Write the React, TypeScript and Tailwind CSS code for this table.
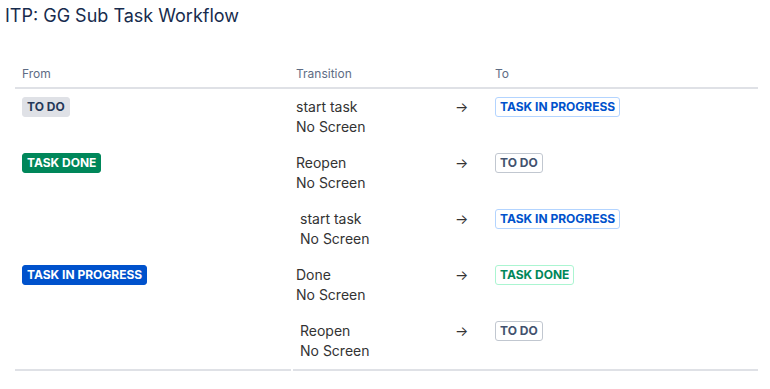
import React from 'react';

type Tone = 'gray' | 'green' | 'blue';

interface Transition {
    name: string;
    screen: string;
    to: { label: string; tone: Tone };
}

interface Group {
    from: { label: string; tone: Tone };
    transitions: Transition[];
}

const boldTone: Record<Tone, string> = {
    gray: 'bg-[#DFE1E6] border-[#DFE1E6] text-[#253858]',
    green: 'bg-[#00875A] border-[#00875A] text-white',
    blue: 'bg-[#0052CC] border-[#0052CC] text-white',
};

const subtleTone: Record<Tone, string> = {
    gray: 'bg-white border-[#C1C7D0] text-[#42526E]',
    green: 'bg-white border-[#ABF5D1] text-[#00875A]',
    blue: 'bg-white border-[#B3D4FF] text-[#0052CC]',
};

const groups: Group[] = [
    {
        from: { label: 'To Do', tone: 'gray' },
        transitions: [{ name: 'start task', screen: 'No Screen', to: { label: 'Task In Progress', tone: 'blue' } }],
    },
    {
        from: { label: 'Task Done', tone: 'green' },
        transitions: [
            { name: 'Reopen', screen: 'No Screen', to: { label: 'To Do', tone: 'gray' } },
            { name: 'start task', screen: 'No Screen', to: { label: 'Task In Progress', tone: 'blue' } },
        ],
    },
    {
        from: { label: 'Task In Progress', tone: 'blue' },
        transitions: [
            { name: 'Done', screen: 'No Screen', to: { label: 'Task Done', tone: 'green' } },
            { name: 'Reopen', screen: 'No Screen', to: { label: 'To Do', tone: 'gray' } },
        ],
    },
];

const Lozenge: React.FC<{ label: string; tone: Tone; bold?: boolean }> = ({ label, tone, bold }) => (
    <span
        className={`flex h-[20px] items-center rounded-[3px] border px-[4px] text-[12px] font-bold uppercase leading-[16px] ${
            bold ? boldTone[tone] : subtleTone[tone]
        }`}
    >
        {label}
    </span>
);

export default function App() {
    return (
        <div className="min-h-screen bg-white font-['Inter',sans-serif] text-[#333333]">
            <h1 className="px-[5px] pt-[4px] text-[18px] font-normal leading-[24px] text-[#172B4D]">
                ITP: GG Sub Task Workflow
            </h1>

            <div className="ml-[15px] mt-[38px] w-[743px]">
                {/* Header */}
                <div className="grid grid-cols-[278px_162px_40px_1fr] border-b-2 border-[#DFE1E6] pb-[5px] text-[12px] leading-[16px] text-[#5E6C84]">
                    <div className="pl-[7px]">From</div>
                    <div className="pl-[3px]">Transition</div>
                    <div />
                    <div>To</div>
                </div>

                {/* Groups */}
                {groups.map((group, gi) => {
                    const last = gi === groups.length - 1;
                    return (
                        <div key={gi} className="grid grid-cols-[276px_1fr] gap-x-[2px]">
                            <div className={`flex items-start pl-[7px] pt-[8px] ${last ? 'border-b-2 border-[#DFE1E6]' : ''}`}>
                                <Lozenge label={group.from.label} tone={group.from.tone} bold />
                            </div>
                            <div className={last ? 'border-b-2 border-[#DFE1E6]' : ''}>
                                {group.transitions.map((t, ti) => (
                                    <div key={ti} className="grid h-[56px] grid-cols-[162px_40px_1fr] py-[8px] text-[14px] leading-[20px]">
                                        <div className={ti === 0 ? 'pl-[3px]' : 'pl-[7px]'}>
                                            <div>{t.name}</div>
                                            <div>{t.screen}</div>
                                        </div>
                                        <div className="text-[#333333]">→</div>
                                        <div className="flex items-start">
                                            <Lozenge label={t.to.label} tone={t.to.tone} />
                                        </div>
                                    </div>
                                ))}
                            </div>
                        </div>
                    );
                })}
            </div>
        </div>
    );
}
